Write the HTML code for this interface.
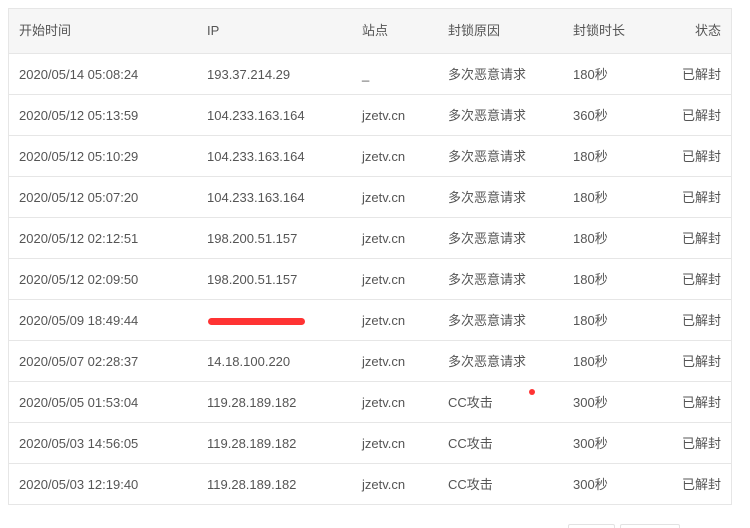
<!DOCTYPE html><html><head><meta charset="utf-8"><style>
html,body{margin:0;width:750px;height:528px;overflow:hidden}
body{background:#fff;font-family:"Liberation Sans","Noto Sans CJK SC",sans-serif;font-size:13px;color:#555;position:relative}
.t{position:absolute;left:8px;top:8px;width:724px;border:1px solid #e6e6e6;border-bottom:none;box-sizing:border-box}
.r{height:41px;border-bottom:1px solid #e6e6e6;position:relative;box-sizing:border-box}
.h{height:45px;background:#f6f6f6}
.r span{position:absolute;top:1px;line-height:40px}
.h span{line-height:44px;top:0}
.a{left:10px}.b{left:198px}.c{left:353px}.d{left:439px}.e{left:564px}.f{right:10px}
.red{position:absolute;left:208px;top:318px;width:97px;height:7px;background:#f33;border-radius:4px}
.dot{position:absolute;left:529px;top:389px;width:6px;height:6px;border-radius:3px;background:#f33}
.p{position:absolute;top:524px;height:10px;border:1px solid #e2e2e2;border-radius:2px}
</style></head><body>
<div class="t">
<div class="r h"><span class="a">开始时间</span><span class="b">IP</span><span class="c">站点</span><span class="d">封锁原因</span><span class="e">封锁时长</span><span class="f">状态</span></div>
<div class="r"><span class="a">2020/05/14 05:08:24</span><span class="b">193.37.214.29</span><span class="c">_</span><span class="d">多次恶意请求</span><span class="e">180秒</span><span class="f">已解封</span></div>
<div class="r"><span class="a">2020/05/12 05:13:59</span><span class="b">104.233.163.164</span><span class="c">jzetv.cn</span><span class="d">多次恶意请求</span><span class="e">360秒</span><span class="f">已解封</span></div>
<div class="r"><span class="a">2020/05/12 05:10:29</span><span class="b">104.233.163.164</span><span class="c">jzetv.cn</span><span class="d">多次恶意请求</span><span class="e">180秒</span><span class="f">已解封</span></div>
<div class="r"><span class="a">2020/05/12 05:07:20</span><span class="b">104.233.163.164</span><span class="c">jzetv.cn</span><span class="d">多次恶意请求</span><span class="e">180秒</span><span class="f">已解封</span></div>
<div class="r"><span class="a">2020/05/12 02:12:51</span><span class="b">198.200.51.157</span><span class="c">jzetv.cn</span><span class="d">多次恶意请求</span><span class="e">180秒</span><span class="f">已解封</span></div>
<div class="r"><span class="a">2020/05/12 02:09:50</span><span class="b">198.200.51.157</span><span class="c">jzetv.cn</span><span class="d">多次恶意请求</span><span class="e">180秒</span><span class="f">已解封</span></div>
<div class="r"><span class="a">2020/05/09 18:49:44</span><span class="c">jzetv.cn</span><span class="d">多次恶意请求</span><span class="e">180秒</span><span class="f">已解封</span></div>
<div class="r"><span class="a">2020/05/07 02:28:37</span><span class="b">14.18.100.220</span><span class="c">jzetv.cn</span><span class="d">多次恶意请求</span><span class="e">180秒</span><span class="f">已解封</span></div>
<div class="r"><span class="a">2020/05/05 01:53:04</span><span class="b">119.28.189.182</span><span class="c">jzetv.cn</span><span class="d">CC攻击</span><span class="e">300秒</span><span class="f">已解封</span></div>
<div class="r"><span class="a">2020/05/03 14:56:05</span><span class="b">119.28.189.182</span><span class="c">jzetv.cn</span><span class="d">CC攻击</span><span class="e">300秒</span><span class="f">已解封</span></div>
<div class="r"><span class="a">2020/05/03 12:19:40</span><span class="b">119.28.189.182</span><span class="c">jzetv.cn</span><span class="d">CC攻击</span><span class="e">300秒</span><span class="f">已解封</span></div>
</div>
<div class="red"></div><div class="dot"></div>
<div class="p" style="left:568px;width:45px"></div><div class="p" style="left:620px;width:58px"></div>
</body></html>
